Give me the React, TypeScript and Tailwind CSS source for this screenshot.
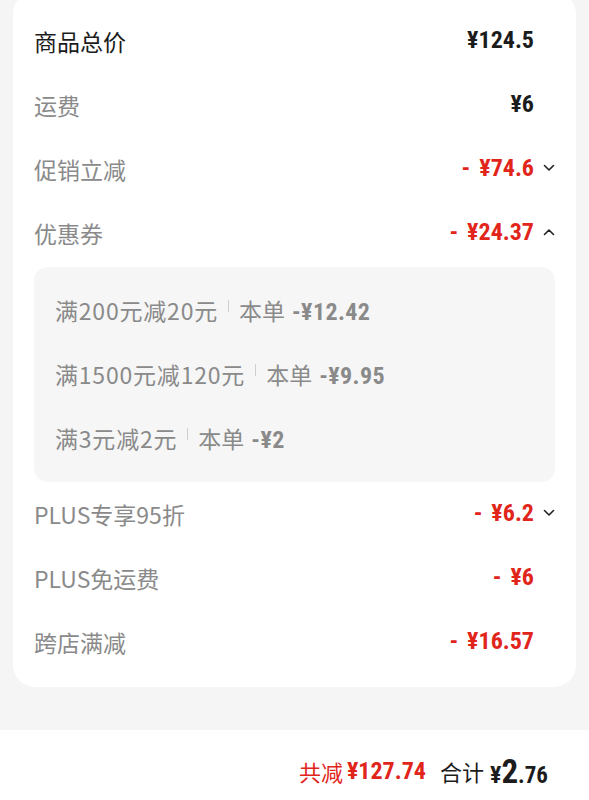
import React from "react";

const CJK = { fontFamily: '"Noto Sans CJK SC", "Noto Sans", sans-serif' };
const NUM = {
  fontFamily:
    '"Liberation Sans Narrow", "Roboto Condensed", "DejaVu Sans Condensed", Roboto, sans-serif',
};

function Chevron({ up }: { up?: boolean }) {
  return (
    <svg width="12" height="8" viewBox="0 0 12 8" className="block">
      <path
        d={up ? "M1.5 6.5 L6 2 L10.5 6.5" : "M1.5 1.5 L6 6 L10.5 1.5"}
        fill="none"
        stroke="#222"
        strokeWidth="1.6"
        strokeLinecap="round"
        strokeLinejoin="round"
      />
    </svg>
  );
}

function Row({
  label,
  value,
  dark,
  red,
  chevron,
}: {
  label: string;
  value: string;
  dark?: boolean;
  red?: boolean;
  chevron?: "up" | "down";
}) {
  return (
    <div className="flex h-[64px] items-center justify-between">
      <span
        className={`text-[23px] leading-none -mt-[3px] ${dark ? "text-[#1c1c1c]" : "text-[#8a8a8a]"}`}
        style={CJK}
      >
        {label}
      </span>
      <div className="flex items-center">
        <span
          className={`flex items-baseline text-[24px] font-bold leading-none -mt-[7px] ${red ? "text-[#e1251b]" : "text-[#1c1c1c]"}`}
          style={NUM}
        >
          {red ? <span className="mr-[9px]">-</span> : null}
          <span>{value}</span>
        </span>
        <div className="flex w-[21px] justify-end -mt-[6px]">
          {chevron ? <Chevron up={chevron === "up"} /> : null}
        </div>
      </div>
    </div>
  );
}

function Coupon({ rule, amount }: { rule: string; amount: string }) {
  return (
    <div className="flex h-[64px] items-center text-[#8a8a8a]">
      <div className="flex items-baseline -mt-[2px]">
        <span className="text-[23px] leading-none tracking-[0.8px]" style={CJK}>
          {rule}
        </span>
        <span className="mx-[10px] inline-block h-[12px] w-px bg-[#cfcfcf] -translate-y-[8px]" />
        <span className="text-[23px] leading-none" style={CJK}>
          本单
        </span>
        <span className="ml-[7px] text-[24px] font-bold leading-none tracking-[0.4px]" style={NUM}>
          -{amount}
        </span>
      </div>
    </div>
  );
}

export default function App() {
  return (
    <div className="flex h-[800px] w-full flex-col overflow-hidden bg-[#f5f5f5]">
      <div className="px-[13px] -mt-[8px]">
        <div className="rounded-[22px] bg-white px-[21px] pt-[19px] pb-[11px]">
          <Row label="商品总价" value="¥124.5" dark />
          <Row label="运费" value="¥6" />
          <Row label="促销立减" value="¥74.6" red chevron="down" />
          <Row label="优惠券" value="¥24.37" red chevron="up" />
          <div className="rounded-[14px] bg-[#f6f6f6] px-[21px] pt-[13px] pb-[10px]">
            <Coupon rule="满200元减20元" amount="¥12.42" />
            <Coupon rule="满1500元减120元" amount="¥9.95" />
            <Coupon rule="满3元减2元" amount="¥2" />
          </div>
          <div className="h-[2px]" />
          <Row label="PLUS专享95折" value="¥6.2" red chevron="down" />
          <Row label="PLUS免运费" value="¥6" red />
          <Row label="跨店满减" value="¥16.57" red />
        </div>
      </div>
      <div className="flex-1" />
      <div className="flex h-[70px] items-center justify-end bg-white pr-[41px] pt-[12px]">
        <span className="text-[22px] leading-none text-[#e1251b]" style={CJK}>
          共减
        </span>
        <span className="ml-[4px] text-[24px] font-bold leading-none text-[#e1251b]" style={NUM}>
          ¥127.74
        </span>
        <span className="ml-[14px] text-[22px] leading-none text-[#1c1c1c]" style={CJK}>
          合计
        </span>
        <span className="ml-[6px] flex items-baseline text-[#1c1c1c]" style={NUM}>
          <span className="text-[24px] font-bold leading-none">¥</span>
          <span className="text-[33px] font-bold leading-none">2</span>
          <span className="text-[23px] font-bold leading-none">.76</span>
        </span>
      </div>
    </div>
  );
}
